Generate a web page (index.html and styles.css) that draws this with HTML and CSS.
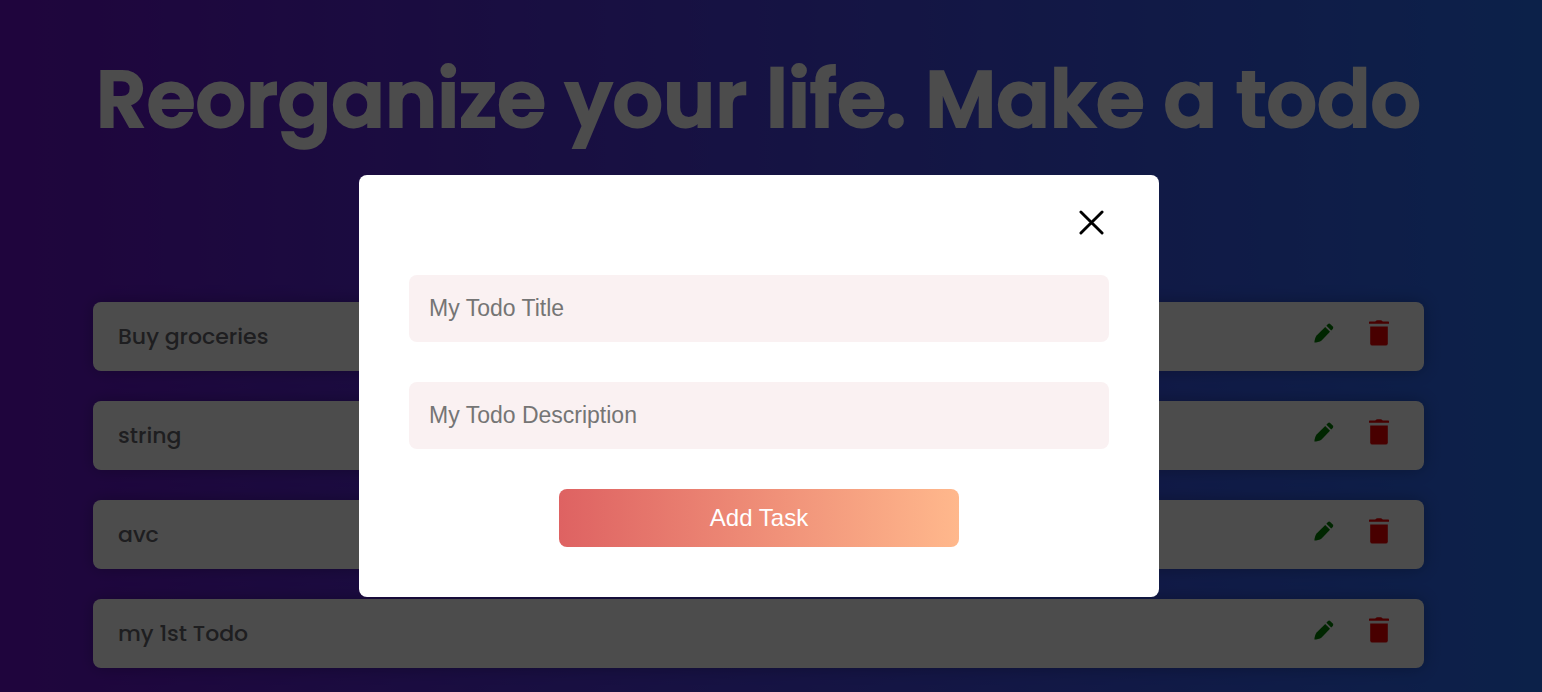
FILE: index.html
```html
<!DOCTYPE html>
<html lang="en">
<head>
<meta charset="utf-8">
<meta name="viewport" content="width=device-width, initial-scale=1">
<title>Todo</title>
<link rel="stylesheet" href="styles.css">
</head>
<body>
<svg class="sprite" aria-hidden="true">
  <symbol id="pencil" viewBox="0 0 20 20">
    <path d="M11.2 3.9 16 8.8 7.6 17.5C6 18.9 2.4 19.5.4 19.6.4 17.6 1.2 14.3 2.6 12.6Z"/>
    <path d="M12.4 2.7 14 1.1Q15.2.1 16.4 1.2L18.8 3.6Q19.8 4.8 18.8 6L17.2 7.6Z"/>
  </symbol>
  <symbol id="trash" viewBox="0 0 20 26">
    <path d="M.6 1.6H6.2L7.4.6Q7.8.3 8.4.3H11.6Q12.2.3 12.6.6L13.8 1.6H19.4Q20 1.6 20 2.2V3.8H0V2.2Q0 1.6.6 1.6Z"/>
    <path d="M1.2 6.6H18.8V23.4Q18.8 25.6 16.6 25.6H3.4Q1.2 25.6 1.2 23.4Z"/>
  </symbol>
</svg>
<main class="page">
  <h1 class="title">Reorganize your life. Make a todo</h1>
  <ul class="todos">
    <li class="todo"><span class="name">Buy groceries</span>
      <button class="icon edit" aria-label="Edit"><svg><use href="#pencil"/></svg></button>
      <button class="icon remove" aria-label="Delete"><svg><use href="#trash"/></svg></button></li>
    <li class="todo"><span class="name">string</span>
      <button class="icon edit" aria-label="Edit"><svg><use href="#pencil"/></svg></button>
      <button class="icon remove" aria-label="Delete"><svg><use href="#trash"/></svg></button></li>
    <li class="todo"><span class="name">avc</span>
      <button class="icon edit" aria-label="Edit"><svg><use href="#pencil"/></svg></button>
      <button class="icon remove" aria-label="Delete"><svg><use href="#trash"/></svg></button></li>
    <li class="todo"><span class="name">my 1st Todo</span>
      <button class="icon edit" aria-label="Edit"><svg><use href="#pencil"/></svg></button>
      <button class="icon remove" aria-label="Delete"><svg><use href="#trash"/></svg></button></li>
  </ul>
</main>
<div class="overlay">
  <form class="modal" role="dialog" aria-modal="true" aria-label="Add a todo">
    <button class="close" type="button" aria-label="Close">
      <svg viewBox="0 0 26 26"><path d="M2 2 24 24M24 2 2 24"/></svg>
    </button>
    <input class="field" type="text" placeholder="My Todo Title" aria-label="My Todo Title">
    <input class="field" type="text" placeholder="My Todo Description" aria-label="My Todo Description">
    <button class="submit" type="submit">Add Task</button>
  </form>
</div>
</body>
</html>
```
FILE: styles.css
```css
* {
  box-sizing: border-box;
}

body {
  margin: 0;
  font-family: Poppins, Inter, sans-serif;
}

button {
  border: 0;
  padding: 0;
  background: none;
  cursor: pointer;
}

.sprite {
  position: absolute;
  width: 0;
  height: 0;
}

.page {
  min-height: 100vh;
  padding: 40px 118px 24px 93px;
  background: linear-gradient(to right, #6a11cb, #296ff6);
}

.title {
  margin: 0 0 142px;
  color: #fff;
  font-size: 79px;
  font-weight: 600;
  line-height: 120px;
  text-align: center;
  -webkit-text-stroke: 2px #fff;
}

.todos {
  display: flex;
  flex-direction: column;
  gap: 30px;
  margin: 0;
  padding: 0;
  list-style: none;
}

.todo {
  display: flex;
  align-items: center;
  min-height: 69px;
  padding: 0 35px 0 25px;
  border-radius: 8px;
  background: #fff;
  box-shadow: 0 0 16px rgba(0, 0, 0, 0.25);
}

.name {
  flex: 1;
  color: #66666c;
  font-size: 22px;
  font-weight: 500;
  line-height: 32px;
}

.icon {
  height: 26px;
  margin-bottom: 8px;
}

.icon svg {
  display: block;
  width: 20px;
  height: 100%;
  fill: currentColor;
}

.edit {
  margin-right: 35px;
  color: green;
}

.remove {
  color: #f00000;
}

.overlay {
  position: fixed;
  inset: 0;
  display: flex;
  align-items: flex-start;
  justify-content: center;
  padding: 175px 24px 0 0;
  background: rgba(0, 0, 0, 0.7);
}

.modal {
  display: flex;
  flex-direction: column;
  align-items: center;
  gap: 40px;
  width: 800px;
  max-width: 100%;
  padding: 35px 50px 50px;
  border-radius: 8px;
  background: #fff;
}

.close {
  align-self: flex-end;
  margin-right: 5px;
}

.close svg {
  display: block;
  width: 25px;
  height: 25px;
  fill: none;
  stroke: #000;
  stroke-width: 3;
  stroke-linecap: round;
}

.field {
  width: 100%;
  height: 67px;
  padding: 0 20px;
  border: 0;
  border-radius: 8px;
  background: #faf1f2;
  font: 23px "Liberation Sans", Arial, sans-serif;
}

.field::placeholder {
  color: #757575;
}

.submit {
  width: 400px;
  max-width: 100%;
  height: 58px;
  border-radius: 8px;
  background: linear-gradient(to right, #de6262, #ffb88c);
  color: #fff;
  font: 24px "Liberation Sans", Arial, sans-serif;
}
```
